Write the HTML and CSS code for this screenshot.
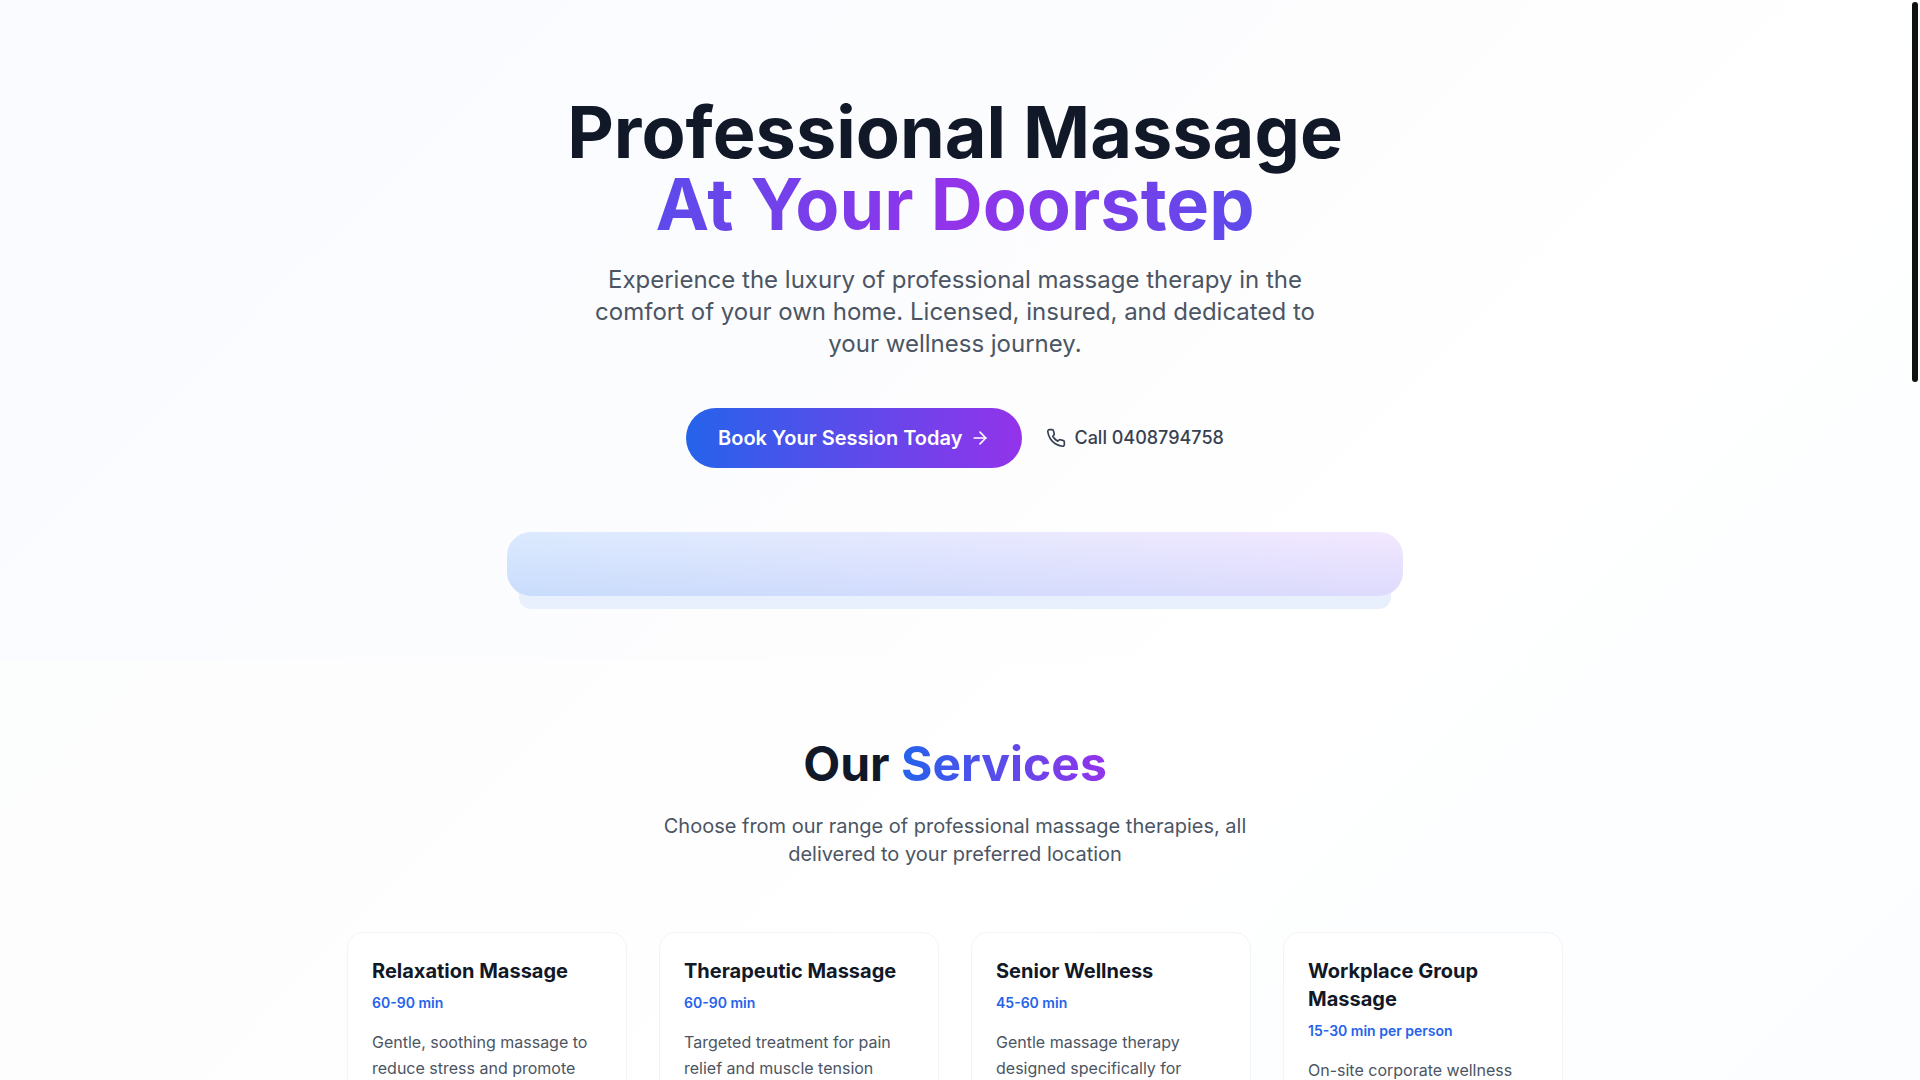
FILE: index.html
```html
<!DOCTYPE html>
<html lang="en">
<head>
  <meta charset="UTF-8" />
  <meta name="viewport" content="width=device-width, initial-scale=1.0" />
  <title>Professional Massage At Your Doorstep</title>
  <link rel="stylesheet" href="styles.css">
</head>
<body>

<main class="page">
  <!-- Hero -->
  <section class="hero">
    <div class="hero-inner">
      <h1 class="hero-title">Professional Massage <span class="hero-accent">At Your Doorstep</span></h1>
      <p class="hero-text">Experience the luxury of professional massage therapy in the comfort of your own home. Licensed, insured, and dedicated to your wellness journey.</p>
      <div class="hero-actions">
        <a class="book-link" href="#services">
          Book Your Session Today
          <svg class="icon" viewBox="0 0 24 24" aria-hidden="true"><path d="M5 12h14"/><path d="m12 5 7 7-7 7"/></svg>
        </a>
        <a class="call-link" href="tel:0408794758">
          <svg class="icon" viewBox="0 0 24 24" aria-hidden="true"><path d="M22 16.92v3a2 2 0 0 1-2.18 2 19.79 19.79 0 0 1-8.63-3.07 19.5 19.5 0 0 1-6-6 19.79 19.79 0 0 1-3.07-8.67A2 2 0 0 1 4.11 2h3a2 2 0 0 1 2 1.72 12.84 12.84 0 0 0 .7 2.81 2 2 0 0 1-.45 2.11L8.09 9.91a16 16 0 0 0 6 6l1.27-1.27a2 2 0 0 1 2.11-.45 12.84 12.84 0 0 0 2.81.7A2 2 0 0 1 22 16.92z"/></svg>
          Call 0408794758
        </a>
      </div>
      <div class="hero-banner"></div>
    </div>
  </section>

  <!-- Services -->
  <section class="services" id="services">
    <h2 class="services-title">Our <span class="services-accent">Services</span></h2>
    <p class="services-text">Choose from our range of professional massage therapies, all delivered to your preferred location</p>
    <div class="cards">
      <article class="card">
        <h3 class="card-title">Relaxation Massage</h3>
        <p class="card-time">60-90 min</p>
        <p class="card-text">Gentle, soothing massage to reduce stress and promote</p>
      </article>
      <article class="card">
        <h3 class="card-title">Therapeutic Massage</h3>
        <p class="card-time">60-90 min</p>
        <p class="card-text">Targeted treatment for pain relief and muscle tension</p>
      </article>
      <article class="card">
        <h3 class="card-title">Senior Wellness</h3>
        <p class="card-time">45-60 min</p>
        <p class="card-text">Gentle massage therapy designed specifically for</p>
      </article>
      <article class="card">
        <h3 class="card-title">Workplace Group Massage</h3>
        <p class="card-time">15-30 min per person</p>
        <p class="card-text">On-site corporate wellness</p>
      </article>
    </div>
  </section>
</main>
<div class="scroll-thumb"></div>

</body>
</html>
```
FILE: styles.css
```css
* {
  box-sizing: border-box;
}

html {
  scrollbar-width: none;
}

body {
  margin: 0;
  padding-right: 10px;
  font-family: Inter, "Liberation Sans", sans-serif;
  color: #111827;
  background: linear-gradient(135deg, #fcfdff, #fdfdfd 35%, #ffffff 60%, #fbfdff);
}

h1, h2, h3, p {
  margin: 0;
}

a {
  text-decoration: none;
}

.page {
  min-height: 100vh;
}

.icon {
  width: 20px;
  height: 20px;
  fill: none;
  stroke: currentColor;
  stroke-width: 2;
  stroke-linecap: round;
  stroke-linejoin: round;
}

/* Hero */
.hero {
  padding: 96px 32px 64px;
  background: linear-gradient(135deg, rgba(247, 249, 255, 0.6), rgba(251, 252, 255, 0.6) 45%, rgba(255, 255, 255, 0) 75%);
}

.hero-inner {
  max-width: 1216px;
  margin: 0 auto;
  text-align: center;
}

.hero-title {
  font-size: 72px;
  line-height: 72px;
  font-weight: 700;
}

.hero-accent {
  display: block;
  color: transparent;
  background: linear-gradient(to right, #2563eb, #9333ea, #2563eb);
  -webkit-background-clip: text;
  background-clip: text;
}

.hero-text {
  max-width: 768px;
  margin: 24px auto 48px;
  font-size: 24px;
  line-height: 32px;
  color: #4b5563;
}

.hero-actions {
  display: flex;
  justify-content: center;
  align-items: center;
  gap: 24px;
}

.book-link,
.call-link {
  display: flex;
  align-items: center;
  gap: 8px;
  line-height: 28px;
}

.book-link {
  padding: 16px 32px;
  border-radius: 30px;
  font-size: 20px;
  font-weight: 600;
  color: #ffffff;
  background: linear-gradient(to right, #2563eb, #9333ea);
}

.call-link {
  font-size: 18px;
  font-weight: 500;
  color: #374151;
}

.hero-banner {
  max-width: 896px;
  height: 64px;
  margin: 64px auto 0;
  border-radius: 24px;
  background:
    linear-gradient(to top, rgba(37, 99, 235, 0.1), transparent),
    linear-gradient(75deg, #dbeafe, #f3e8ff);
  box-shadow: 0 25px 0 -12px #e8effd;
}

/* Services */
.services {
  padding: 80px 32px;
  text-align: center;
}

.services-title {
  font-size: 48px;
  line-height: 48px;
  font-weight: 700;
}

.services-accent {
  color: transparent;
  background: linear-gradient(to right, #2563eb, #9333ea);
  -webkit-background-clip: text;
  background-clip: text;
}

.services-text {
  max-width: 672px;
  margin: 24px auto 64px;
  font-size: 20px;
  line-height: 28px;
  color: #4b5563;
}

.cards {
  display: grid;
  grid-template-columns: repeat(4, 1fr);
  gap: 32px;
  max-width: 1216px;
  margin: 0 auto;
  text-align: left;
}

.card {
  padding: 24px;
  border: 1px solid #f3f4f6;
  border-radius: 16px;
  background: #ffffff;
}

.card-title {
  font-size: 20px;
  line-height: 28px;
  font-weight: 700;
}

.card-time {
  margin: 8px 0 16px;
  font-size: 14px;
  line-height: 20px;
  font-weight: 600;
  color: #2563eb;
}

.card-text {
  font-size: 16px;
  line-height: 26px;
  color: #4b5563;
}

.scroll-thumb {
  position: fixed;
  top: 2px;
  right: 2px;
  width: 6px;
  height: 380px;
  border-radius: 3px;
  background: #0f1111;
}
```
